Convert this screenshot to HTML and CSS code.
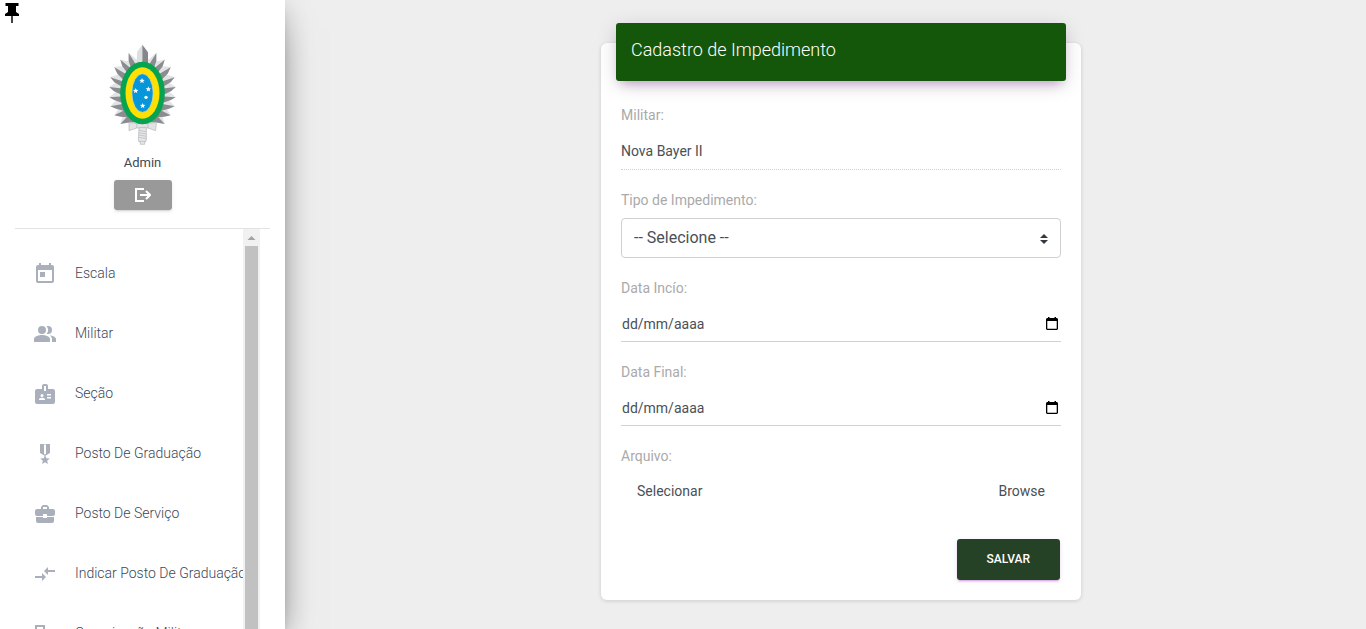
FILE: index.html
```html
<!DOCTYPE html>
<html lang="pt-BR">
<head>
<meta charset="utf-8">
<meta name="viewport" content="width=device-width, initial-scale=1">
<title>Cadastro de Impedimento</title>
<link rel="stylesheet" href="styles.css">
</head>
<body>
<div class="app">
  <aside class="sidebar">
    <button class="pin" type="button" aria-label="Fixar menu">
      <svg viewBox="0 0 24 24"><path d="M5.500 3h13v3H16v6l3 2v2H5v-2l3-2V6H5.500z"/><path fill="#444" d="M11 16h2v7h-2z"/></svg>
    </button>
    <div class="profile">
      <svg class="emblem" viewBox="54 27 207 306" aria-hidden="true">
        <defs>
          <g id="rays">
            <path fill="#e2e3e5" d="M158 80L137 72 116 53 116 76 134 100zM134 78L108 78 90 73 96 92 122 116zM124 100L92 94 72 96 82 114 110 136zM112 118L82 120 61 126 73 140 106 156zM104 138L76 145 58 155 72 167 104 180zM104 162L74 173 58 186 72 193 106 206zM104 186L77 198 61 213 78 219 110 228zM108 208L84 223 73 241 92 243 122 250zM114 230L97 246 91 267 112 262 142 262z"/>
            <path fill="#8a8c8f" d="M116 54L140 92 124 102 116 78zM91 74L128 104 114 116 97 94zM73 97L114 121 103 137 82 116zM61 127L106 142 98 157 73 142zM58 156L104 161 96 180 72 169zM58 187L102 184 98 204 72 195zM61 214L102 206 104 228 78 221zM73 241L106 224 114 247 92 245zM91 267L116 240 136 262 112 263z"/>
          </g>
        </defs>
        <use href="#rays"/>
        <use href="#rays" transform="translate(315 0) scale(-1 1)"/>
        <path fill="#dddee0" d="M157 29L141 52 141 90H157z"/>
        <path fill="#85878a" d="M157 29L174 52 174 90H157z"/>
        <path fill="#e2e3e5" stroke="#b5b7ba" stroke-width="2" d="M117 262L140 266H174L199 262 197 287 174 279H140L117 287z"/>
        <path fill="#e6e7e8" stroke="#b5b7ba" stroke-width="2" d="M147 278h22v37l-3 6h-2v7h-13v-7h-3l-3-6z"/>
        <path fill="none" stroke="#b5b7ba" stroke-width="2" d="M140 266v13M174 266v13M147 286l22 4M147 293l22 4M147 300l22 4M147 307l22 4M146 319h22"/>
        <ellipse cx="157.500" cy="174" rx="67" ry="94" fill="#06a350"/>
        <ellipse cx="157.500" cy="174" rx="51" ry="77" fill="#ffe000"/>
        <ellipse cx="157.500" cy="174" rx="32" ry="58" fill="#0796da" stroke="#e9e2a0" stroke-width="2"/>
        <g fill="#fff">
          <path id="star" d="M156 129l2.200 5.500 6 .4-4.600 3.800 1.500 5.800-5.100-3.200-5.100 3.200 1.500-5.800-4.600-3.800 6-.4z"/>
          <use href="#star" x="-19" y="30"/>
          <use href="#star" x="19" y="25"/>
          <use href="#star" x="2" y="75"/>
          <circle cx="168" cy="187" r="5"/>
        </g>
      </svg>
      <div class="user">Admin</div>
      <button class="logout" type="button" aria-label="Sair">
        <svg viewBox="0 0 16 16"><path fill="none" stroke="#fff" stroke-width="2" d="M9 2H1v12h8M5 8h10M11 4l4 4-4 4"/></svg>
      </button>
    </div>
    <div class="menu">
      <nav class="links">
        <a href="#"><svg viewBox="0 0 24 24"><path d="M19 3h-1V1h-2v2H8V1H6v2H5a2 2 0 0 0-2 2v14c0 1.100.9 2 2 2h14a2 2 0 0 0 2-2V5a2 2 0 0 0-2-2zm0 16H5V8h14v11zM7 10h5v5H7z"/></svg><span>Escala</span></a>
        <a href="#"><svg viewBox="0 0 24 24"><path d="M16.670 13.130C18.040 14.060 19 15.320 19 17v3h4v-3c0-2.180-3.570-3.470-6.330-3.870zM15 12a4 4 0 0 0 0-8c-.47 0-.91.1-1.330.24a5.980 5.980 0 0 1 0 7.520c.42.14.86.24 1.330.24zM9 12a4 4 0 1 0 0-8 4 4 0 0 0 0 8zm0 1c-2.670 0-8 1.340-8 4v3h16v-3c0-2.660-5.330-4-8-4z"/></svg><span>Militar</span></a>
        <a href="#"><svg viewBox="0 0 24 24"><path fill-rule="evenodd" d="M20 7h-5V4a2 2 0 0 0-2-2h-2a2 2 0 0 0-2 2v3H4a2 2 0 0 0-2 2v11c0 1.100.9 2 2 2h16a2 2 0 0 0 2-2V9a2 2 0 0 0-2-2zM9 12a1.500 1.500 0 1 1 0 3 1.500 1.500 0 0 1 0-3zm3 6H6v-.75c0-1 2-1.500 3-1.500s3 .5 3 1.500V18zm1-9h-2V4h2v5zm5 7.500h-4V15h4v1.500zm0-3h-4V12h4v1.500z"/></svg><span>Seção</span></a>
        <a href="#"><svg viewBox="0 0 24 24"><path fill-rule="evenodd" d="M17 10.430V2H7v8.430c0 .35.18.68.49.86l4.180 2.510-.99 2.340-3.410.29 2.590 2.240L9.070 22 12 20.230 14.930 22l-.78-3.330 2.590-2.240-3.410-.29-.99-2.340 4.180-2.510c.3-.18.48-.5.48-.86zM11 2.500h2v9.500l-1 .6-1-.6z"/></svg><span>Posto De Graduação</span></a>
        <a href="#"><svg viewBox="0 0 24 24"><path d="M10 16v-1H3.010L3 19a2 2 0 0 0 2 2h14a2 2 0 0 0 2-2v-4h-7v1h-4zm10-9h-4.010V5l-2-2h-4l-2 2v2H4a2 2 0 0 0-2 2v3c0 1.110.89 2 2 2h6v-2h4v2h6a2 2 0 0 0 2-2V9a2 2 0 0 0-2-2zm-6 0h-4V5h4v2z"/></svg><span>Posto De Serviço</span></a>
        <a href="#"><svg viewBox="0 0 24 24"><path d="M9.010 14H2v2h7.010v3L13 15l-3.990-4v3zm5.980-1v-3H22V8h-7.010V5L11 9l3.990 4z"/></svg><span>Indicar Posto De Graduação</span></a>
        <a href="#"><svg viewBox="0 0 24 24"><path d="M12 7V3H2v18h20V7H12zM10 19H4V5h6v14zm10 0h-8v-2h2v-2h-2v-2h2v-2h-2V9h8v10z"/></svg><span>Organização Militar</span></a>
      </nav>
      <div class="scrollbar" aria-hidden="true">
        <svg viewBox="0 0 17 17"><path d="M4.500 11l4-4 4 4z"/></svg>
        <div class="thumb"></div>
      </div>
    </div>
  </aside>

  <main class="content">
    <section class="card">
      <h1 class="card-title">Cadastro de Impedimento</h1>
      <form class="form">
        <div class="field">
          <label for="militar">Militar:</label>
          <input class="control readonly" id="militar" type="text" value="Nova Bayer II" readonly>
        </div>
        <div class="field">
          <label for="tipo">Tipo de Impedimento:</label>
          <div class="select">
            <select id="tipo"><option>-- Selecione --</option></select>
            <svg viewBox="0 0 8 10"><path d="M0 4l4-4 4 4zM0 6h8l-4 4z"/></svg>
          </div>
        </div>
        <div class="field">
          <label for="inicio">Data Incío:</label>
          <div class="control date">
            <input id="inicio" type="text" placeholder="dd/mm/aaaa">
            <button type="button" aria-label="Abrir calendário"><svg viewBox="0 0 12 13"><path fill-rule="evenodd" d="M1 1h1V0h1.500v1h5V0H10v1h1l1 1v10l-1 1H1l-1-1V2zM1.300 4v7.700h9.400V4z"/></svg></button>
          </div>
        </div>
        <div class="field">
          <label for="final">Data Final:</label>
          <div class="control date">
            <input id="final" type="text" placeholder="dd/mm/aaaa">
            <button type="button" aria-label="Abrir calendário"><svg viewBox="0 0 12 13"><path fill-rule="evenodd" d="M1 1h1V0h1.500v1h5V0H10v1h1l1 1v10l-1 1H1l-1-1V2zM1.300 4v7.700h9.400V4z"/></svg></button>
          </div>
        </div>
        <div class="field">
          <label for="arquivo">Arquivo:</label>
          <label class="file" for="arquivo"><span>Selecionar</span><span>Browse</span><input id="arquivo" type="file"></label>
        </div>
        <button class="save" type="submit">SALVAR</button>
      </form>
    </section>
  </main>
</div>
</body>
</html>
```
FILE: styles.css
```css
* { box-sizing: border-box; }

body {
  margin: 0;
  background: #eee;
  color: #495057;
  font-family: Roboto, "Liberation Sans", sans-serif;
  font-size: 14px;
  line-height: 20px;
}

button, input, select { font: inherit; color: inherit; }
button { border: 0; padding: 0; background: none; cursor: pointer; }
svg { display: block; }

.app {
  display: flex;
  height: 100vh;
  overflow: hidden;
}

/* Sidebar */
.sidebar {
  position: relative;
  display: flex;
  flex-direction: column;
  flex: 0 0 285px;
  min-width: 0;
  padding: 44px 15px 0;
  background: #fff;
  box-shadow: 0 16px 38px -12px rgba(0, 0, 0, .56), 0 4px 25px rgba(0, 0, 0, .12), 0 8px 10px -5px rgba(0, 0, 0, .2);
}

.pin {
  position: absolute;
  top: 0;
  left: 0;
  color: #000;
}
.pin svg { width: 24px; height: 24px; }

.profile {
  display: flex;
  flex-direction: column;
  align-items: center;
  padding-bottom: 18px;
  border-bottom: 1px solid #e3e3e3;
}
.emblem { width: 69px; height: 102px; }
.user {
  margin: 7px 0;
  font-size: 13px;
  color: #3c4858;
}
.logout {
  display: grid;
  place-items: center;
  width: 58px;
  height: 30px;
  border-radius: 3px;
  background: #999;
  box-shadow: 0 2px 2px rgba(153, 153, 153, .14), 0 3px 1px -2px rgba(153, 153, 153, .2), 0 1px 5px rgba(153, 153, 153, .12);
}
.logout svg { width: 16px; height: 16px; }

.menu {
  display: flex;
  flex: 1;
  min-height: 0;
  margin-right: 10px;
}
.links {
  flex: 1;
  min-width: 0;
  padding-top: 14px;
  overflow: hidden;
}
.links a {
  display: flex;
  align-items: center;
  gap: 18px;
  height: 60px;
  padding-left: 18px;
  color: #3c4858;
  font-weight: 300;
  text-decoration: none;
  white-space: nowrap;
}
.links svg {
  flex: none;
  width: 24px;
  height: 24px;
  margin-top: 2px;
  fill: #a9afbb;
}
.scrollbar {
  display: flex;
  flex-direction: column;
  flex: 0 0 17px;
  background: #f1f1f1;
}
.scrollbar svg { width: 17px; height: 17px; fill: #a3a3a3; }
.thumb { flex: 1; margin: 0 2px; background: #c1c1c1; }

/* Form card */
.content {
  flex: 1;
  padding: 43px 0 0 31px;
}
.card {
  display: flex;
  flex-direction: column;
  max-width: 480px;
  margin: 0 auto;
  padding: 0 15px 20px;
  border-radius: 6px;
  background: #fff;
  box-shadow: 0 1px 4px rgba(0, 0, 0, .14);
}
.card-title {
  margin: -20px 0 24px;
  padding: 14px 15px 18px;
  border-radius: 3px;
  background: #14570a;
  box-shadow: 0 4px 20px rgba(0, 0, 0, .14), 0 7px 10px -5px rgba(156, 39, 176, .4);
  color: #fff;
  font-size: 18px;
  font-weight: 300;
  line-height: 26px;
}
.form {
  display: flex;
  flex-direction: column;
  gap: 20px;
  padding: 0 5px;
}
.field {
  display: flex;
  flex-direction: column;
  gap: 8px;
}
.field > label:first-child { color: #aaa; }
.control {
  width: 100%;
  height: 36px;
  padding: 0;
  border: 0;
  border-bottom: 1px solid #d2d2d2;
  border-radius: 0;
  background: none;
  outline: 0;
}
.readonly { height: 37px; border-bottom-style: dotted; }

.select { position: relative; }
.select select {
  display: block;
  width: 100%;
  height: 40px;
  padding: 0 28px 0 12px;
  border: 1px solid #d0d0d0;
  border-radius: 4px;
  appearance: none;
  background: #fff;
  font-size: 16px;
}
.select svg {
  position: absolute;
  top: 16px;
  right: 13px;
  width: 8px;
  height: 10px;
  fill: #343a40;
  pointer-events: none;
}

.date {
  display: flex;
  align-items: center;
  padding: 0 3px 0 1px;
}
.date input {
  flex: 1;
  min-width: 0;
  padding: 0;
  border: 0;
  outline: 0;
  background: none;
}
.date input::placeholder { color: #495057; opacity: 1; }
.date svg { width: 12px; height: 13px; }

.file {
  display: flex;
  justify-content: space-between;
  padding: 7px 16px;
}
.file input {
  position: absolute;
  width: 1px;
  height: 1px;
  opacity: 0;
}

.save {
  align-self: flex-end;
  margin: 11px 1px 0 0;
  padding: 10px 30px 11px;
  border-radius: 3px;
  background: #264226;
  box-shadow: 0 2px 2px rgba(156, 39, 176, .14), 0 3px 1px -2px rgba(156, 39, 176, .2), 0 1px 5px rgba(156, 39, 176, .12);
  color: #fff;
  font-size: 12px;
  font-weight: 500;
}
```
